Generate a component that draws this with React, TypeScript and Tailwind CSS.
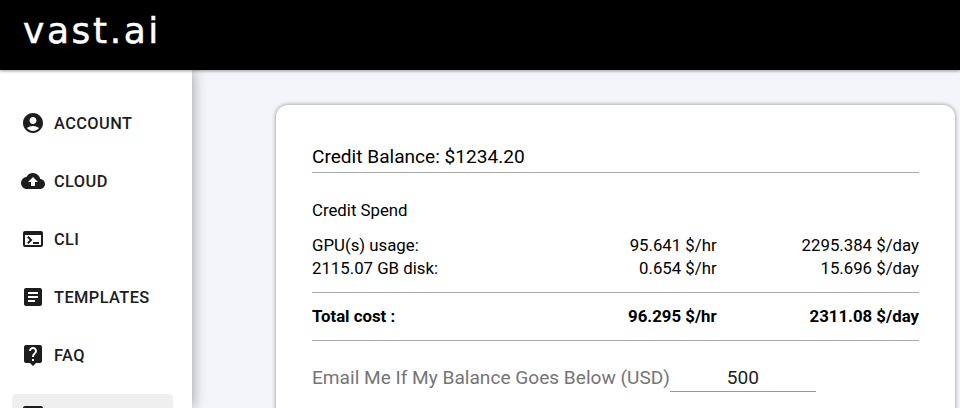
import type { ReactNode } from "react";
import {
  MdAccountCircle,
  MdArticle,
  MdBackup,
  MdCreditCard,
  MdLiveHelp,
  MdOutlineTerminal,
} from "react-icons/md";

const navItems = [
  { label: "ACCOUNT", icon: MdAccountCircle },
  { label: "CLOUD", icon: MdBackup },
  { label: "CLI", icon: MdOutlineTerminal },
  { label: "TEMPLATES", icon: MdArticle },
  { label: "FAQ", icon: MdLiveHelp },
  { label: "BILLING", icon: MdCreditCard, active: true },
];

const usage = [
  { label: "GPU(s) usage:", hourly: "95.641 $/hr", daily: "2295.384 $/day" },
  { label: "2115.07 GB disk:", hourly: "0.654 $/hr", daily: "15.696 $/day" },
];

function Sidebar() {
  return (
    <nav className="flex w-48 shrink-0 flex-col gap-[18px] bg-white px-3 pt-[33px] shadow-[2px_0_12px_rgba(0,0,0,0.3)]">
      {navItems.map(({ label, icon: Icon, active }) => (
        <a
          key={label}
          className={`flex h-10 w-[161px] shrink-0 items-center gap-[9px] rounded pl-[9px] text-[16.4px] leading-6 font-medium tracking-[0.4px] text-[#1d1d1d] ${
            active ? "mt-px bg-[#efefef]" : ""
          }`}
        >
          <Icon className="size-6 shrink-0" />
          <span className="pt-0.5">{label}</span>
        </a>
      ))}
    </nav>
  );
}

function CostRow({
  label,
  hourly,
  daily,
}: {
  label: ReactNode;
  hourly: string;
  daily: string;
}) {
  return (
    <div className="grid grid-cols-3">
      <span>{label}</span>
      <span className="text-right">{hourly}</span>
      <span className="text-right">{daily}</span>
    </div>
  );
}

function BillingCard() {
  return (
    <section className="h-[360px] w-[679px] shrink-0 rounded-xl bg-white px-9 pt-[38px] text-black shadow-[0_0_4px_rgba(0,0,0,0.45)]">
      <h2 className="h-[30px] border-b border-[#aaa] text-[19.1px] leading-[28px]">
        Credit Balance: $1234.20
      </h2>

      <div className="pt-[26px] text-[16.8px] leading-[23px]">
        <h3>Credit Spend</h3>
        <div className="mt-3 border-b border-[#aaa] pb-3">
          {usage.map((row) => (
            <CostRow key={row.label} {...row} />
          ))}
        </div>
        <div className="border-b border-[#aaa] py-3 font-bold">
          <CostRow label="Total cost :" hourly="96.295 $/hr" daily="2311.08 $/day" />
        </div>
      </div>

      <label className="mt-6 flex text-[19.1px] leading-[26px] text-[#757575]">
        Email Me If My Balance Goes Below (USD)
        <input
          defaultValue="500"
          className="w-[146px] border-b border-[#999] text-center text-[#1d1d1d] outline-none"
        />
      </label>
    </section>
  );
}

export default function App() {
  return (
    <div className="flex h-[408px] w-[960px] flex-col overflow-hidden bg-[#f3f5fa] font-['Roboto',sans-serif]">
      <header className="relative z-10 h-[70px] shrink-0 bg-black pl-[23px] shadow-[0_1px_3px_rgba(0,0,0,0.4)]">
        <span className="block pt-[10px] font-['DejaVu_Sans',sans-serif] text-[36px] leading-[42px] tracking-[2.6px] text-white [-webkit-text-stroke:0.5px_white]">
          vast.ai
        </span>
      </header>
      <div className="flex min-h-0 flex-1">
        <Sidebar />
        <main className="pt-[35px] pl-[84px]">
          <BillingCard />
        </main>
      </div>
    </div>
  );
}
